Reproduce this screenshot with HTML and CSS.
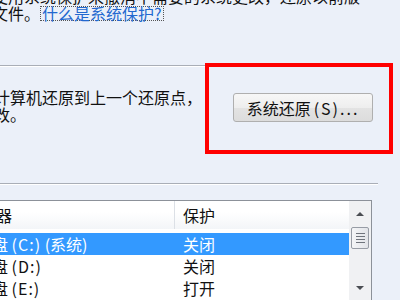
FILE: index.html
```html
<!DOCTYPE html>
<html lang="zh-CN">
<head>
<meta charset="utf-8">
<title>系统保护</title>
<link rel="stylesheet" href="styles.css">
</head>
<body>
<div class="tab">
  <p class="intro">可以使用系统保护来撤消不需要的系统更改，还原以前版本的文件。<a class="link" href="#">什么是系统保护?</a></p>
  <div class="sep"></div>
  <div class="restore">
    <p class="restore-text">您可以通过将计算机还原到上一个还原点，来撤消系统更改。</p>
    <button class="btn" type="button">系统还原<span class="acc">(S)...</span></button>
    <div class="highlight"></div>
  </div>
  <div class="sep sep2"></div>
  <div class="list">
    <div class="list-main">
      <div class="lv-head">
        <div class="c1">可用驱动器</div>
        <div class="c2">保护</div>
      </div>
      <div class="lv-body">
        <div class="row sel"><div class="c1">本地磁盘 <span class="drv">(C:)</span> (系统)</div><div class="c2">关闭</div></div>
        <div class="row"><div class="c1">本地磁盘 <span class="drv">(D:)</span></div><div class="c2">关闭</div></div>
        <div class="row"><div class="c1">本地磁盘 <span class="drv">(E:)</span></div><div class="c2">打开</div></div>
      </div>
    </div>
    <div class="scroll">
      <div class="sb-btn"><span class="tri-up"></span></div>
      <div class="thumb"><span class="grip"></span></div>
      <div class="sb-track"></div>
      <div class="sb-btn"><span class="tri-down"></span></div>
    </div>
  </div>
</div>
</body>
</html>
```
FILE: styles.css
```css
html, body {
  margin: 0;
  height: 300px;
  overflow: hidden;
}
body {
  background: #EBF0F9;
  font-family: "Noto Sans CJK SC", "Liberation Sans", sans-serif;
  font-size: 16px;
  color: #111;
}
.tab {
  width: 400px;
}
.intro {
  margin: -12px 0 0 -40px;
  width: 405px;
  line-height: 17px;
}
.link {
  display: inline-block;
  line-height: 13px;
  color: #2268CF;
  text-decoration: none;
  border: 1px dotted #555;
  padding: 0 1px;
}
.sep {
  margin-top: 43px;
  width: 378px;
  height: 1px;
  background: #A9AEB7;
  border-bottom: 1px solid #FFFFFF;
}
.restore {
  position: relative;
  display: flex;
  align-items: flex-start;
  height: 116px;
}
.restore-text {
  flex: none;
  margin: 22px 0 0 -102px;
  width: 310px;
  line-height: 17px;
}
.btn {
  flex: none;
  margin: 26px 0 0 25px;
  width: 140px;
  height: 29px;
  padding: 0;
  font: inherit;
  color: #111;
  background: linear-gradient(#F7F7F7, #EEEEEE 50%, #E3E3E3 51%, #DCDCDC);
  border: 1px solid #AFAFAF;
  border-radius: 3px;
}
.acc {
  margin-left: 3px;
  letter-spacing: 2px;
}
.drv {
  letter-spacing: 1px;
}
.highlight {
  position: absolute;
  left: 205px;
  top: -4px;
  width: 180px;
  height: 83px;
  border: 4px solid #FF0000;
}
.sep2 {
  margin-top: 0;
}
.list {
  box-sizing: border-box;
  margin: 15px 0 0 -80px;
  width: 452px;
  height: 101px;
  border: 1px solid #8C9199;
  border-bottom: none;
  background: #FFFFFF;
  display: flex;
}
.list-main {
  flex: 1;
  min-width: 0;
}
.lv-head {
  display: flex;
  height: 28px;
  line-height: 28px;
  background: linear-gradient(#FFFFFF, #FFFFFF 40%, #F3F5F8);
}
.lv-head .c1 {
  box-sizing: border-box;
  width: 254px;
  padding-left: 11px;
  border-right: 1px solid #DCE0E6;
}
.lv-head .c2 {
  padding-left: 8px;
}
.lv-body {
  padding-top: 4px;
}
.row {
  display: flex;
  height: 22px;
  line-height: 22px;
}
.row .c1 {
  box-sizing: border-box;
  width: 254px;
  padding-left: 23px;
}
.row .c2 {
  padding-left: 8px;
}
.row.sel {
  background: #3399FF;
  color: #FFFFFF;
}
.scroll {
  flex: none;
  width: 22px;
  background: #F0F1F3;
  display: flex;
  flex-direction: column;
  align-items: center;
}
.sb-btn {
  height: 26px;
  width: 100%;
  display: flex;
  align-items: center;
  justify-content: center;
}
.tri-up {
  width: 0;
  height: 0;
  border-left: 4px solid transparent;
  border-right: 4px solid transparent;
  border-bottom: 4px solid #4A4D52;
}
.tri-down {
  width: 0;
  height: 0;
  border-left: 4px solid transparent;
  border-right: 4px solid transparent;
  border-top: 4px solid #4A4D52;
}
.thumb {
  box-sizing: border-box;
  width: 18px;
  height: 22px;
  border: 1px solid #979CA5;
  border-radius: 2px;
  background: linear-gradient(90deg, #F4F5F7, #E2E4E8);
  display: flex;
  align-items: center;
  justify-content: center;
}
.grip {
  width: 9px;
  height: 10px;
  background: repeating-linear-gradient(#6F747C 0 1px, transparent 1px 3px);
}
.sb-track {
  flex: 1;
}
```
